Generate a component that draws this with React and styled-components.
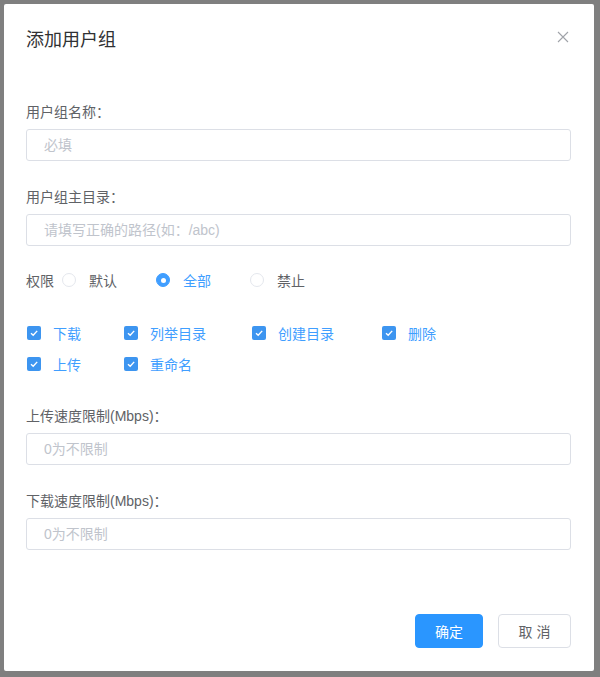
import React, { useState } from "react";
import styled, { createGlobalStyle } from "styled-components";

const GlobalStyle = createGlobalStyle`
  html, body {
    margin: 0;
    padding: 0;
    background: #7f7f7f;
  }
  body {
    font-family: "Liberation Sans", "Noto Sans CJK SC", sans-serif;
    font-size: 14px;
  }
  * { box-sizing: border-box; }
`;

const Overlay = styled.div`
  padding: 4px 6px 6px 4px;
  height: 677px;
`;

const Dialog = styled.div`
  background: #fff;
  border-radius: 2px;
  height: 667px;
  display: flex;
  flex-direction: column;
`;

const Header = styled.div`
  display: flex;
  align-items: flex-start;
  justify-content: space-between;
  padding: 24px 24px 0 22px;
`;

const Title = styled.span`
  font-size: 18px;
  line-height: 24px;
  color: #303133;
`;

const Close = styled.button`
  border: 0;
  background: none;
  padding: 0;
  margin-top: 2px;
  width: 14px;
  height: 14px;
  display: flex;
  align-items: center;
  justify-content: center;
  cursor: pointer;
`;

const Body = styled.div`
  padding: 44px 23px 0 22px;
`;

const Field = styled.div`
  margin-bottom: ${(p) => p.gap || 20}px;
`;

const Label = styled.div`
  line-height: 32px;
  color: #606266;
`;

const Input = styled.input`
  display: block;
  width: 100%;
  height: 32px;
  margin-top: 1px;
  border: 1px solid #dcdfe6;
  border-radius: 3px;
  padding: 0 17px;
  font-size: 14px;
  font-family: inherit;
  color: #606266;
  outline: none;
  &::placeholder {
    color: #c0c4cc;
  }
`;

const RadioRow = styled.div`
  display: flex;
  align-items: center;
  height: 32px;
  margin-bottom: 21px;
  color: #606266;
`;

const RadioLabel = styled.span`
  margin-right: 8px;
`;

const Radio = styled.label`
  display: flex;
  align-items: center;
  margin-right: 39px;
  color: ${(p) => (p.checked ? "#409eff" : "#606266")};
  cursor: pointer;
`;

const Circle = styled.span`
  width: 14px;
  height: 14px;
  border-radius: 50%;
  margin-right: 13px;
  border: 1px solid ${(p) => (p.checked ? "#409eff" : "#e4e7ed")};
  background: ${(p) => (p.checked ? "#409eff" : "#fff")};
  display: flex;
  align-items: center;
  justify-content: center;
  &::after {
    content: "";
    width: 5px;
    height: 5px;
    border-radius: 50%;
    background: #fff;
    display: ${(p) => (p.checked ? "block" : "none")};
  }
`;

const CheckGrid = styled.div`
  display: grid;
  grid-template-columns: 97px 128px 130px auto;
  justify-content: start;
  padding-left: 1px;
  margin-bottom: 21px;
`;

const Check = styled.label`
  display: flex;
  align-items: center;
  height: 31px;
  color: #409eff;
  cursor: pointer;
`;

const Box = styled.span`
  width: 14px;
  height: 14px;
  border-radius: 2px;
  background: #3d95f0;
  margin-right: 12px;
  display: flex;
  align-items: center;
  justify-content: center;
`;

const Footer = styled.div`
  margin-top: auto;
  display: flex;
  justify-content: flex-end;
  gap: 15px;
  padding: 0 23px 23px 0;
`;

const Button = styled.button`
  height: 34px;
  width: ${(p) => (p.primary ? 68 : 73)}px;
  padding: 0;
  border-radius: 4px;
  font-size: 14px;
  font-family: inherit;
  border: 1px solid ${(p) => (p.primary ? "#2a96ff" : "#dcdfe6")};
  background: ${(p) => (p.primary ? "#2a96ff" : "#fff")};
  color: ${(p) => (p.primary ? "#fff" : "#606266")};
  cursor: pointer;
`;

const perms = ["下载", "列举目录", "创建目录", "删除", "上传", "重命名"];

const Tick = () => (
  <svg width="10" height="10" viewBox="0 0 10 10">
    <path d="M2 5.2 L4.2 7.3 L8.2 2.9" fill="none" stroke="#fff" strokeWidth="1.4" />
  </svg>
);

export default function App() {
  const [mode, setMode] = useState("all");
  const options = [
    ["default", "默认"],
    ["all", "全部"],
    ["deny", "禁止"],
  ];

  return (
    <>
      <GlobalStyle />
      <Overlay>
        <Dialog>
          <Header>
            <Title>添加用户组</Title>
            <Close aria-label="close">
              <svg width="12" height="12" viewBox="0 0 12 12">
                <path d="M1 1 L11 11 M11 1 L1 11" stroke="#a0a3a9" strokeWidth="1.1" />
              </svg>
            </Close>
          </Header>
          <Body>
            <Field>
              <Label>用户组名称：</Label>
              <Input placeholder="必填" />
            </Field>
            <Field gap={18}>
              <Label>用户组主目录：</Label>
              <Input placeholder="请填写正确的路径(如：/abc)" />
            </Field>
            <RadioRow>
              <RadioLabel>权限</RadioLabel>
              {options.map(([key, text]) => (
                <Radio key={key} checked={mode === key} onClick={() => setMode(key)}>
                  <Circle checked={mode === key} />
                  {text}
                </Radio>
              ))}
            </RadioRow>
            <CheckGrid>
              {perms.map((p) => (
                <Check key={p}>
                  <Box>
                    <Tick />
                  </Box>
                  {p}
                </Check>
              ))}
            </CheckGrid>
            <Field>
              <Label>上传速度限制(Mbps)：</Label>
              <Input placeholder="0为不限制" />
            </Field>
            <Field>
              <Label>下载速度限制(Mbps)：</Label>
              <Input placeholder="0为不限制" />
            </Field>
          </Body>
          <Footer>
            <Button primary>确定</Button>
            <Button>取 消</Button>
          </Footer>
        </Dialog>
      </Overlay>
    </>
  );
}
